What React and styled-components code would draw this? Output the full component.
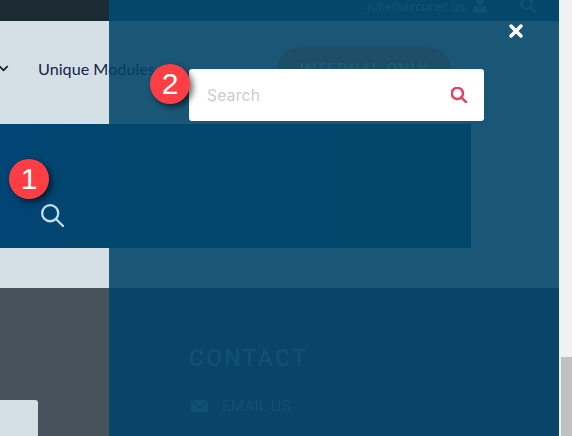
import React from "react";
import styled, { createGlobalStyle } from "styled-components";
import { X } from "lucide-react";
import { FaChevronDown, FaUser, FaSearch } from "react-icons/fa";

const GlobalStyle = createGlobalStyle`
html, body {
  margin: 0;
  padding: 0;
  height: 100%;
  overflow: hidden;
  background: #f1f1f1;
}
* { box-sizing: border-box; }
`;

const Shell = styled.div`
display: flex;
width: 572px;
height: 436px;
`;
const Viewport = styled.div`
position: relative;
width: 559px;
height: 436px;
overflow: hidden;
font-family: "Open Sans", sans-serif;
`;
const ScrollTrack = styled.div`
width: 13px;
height: 436px;
background: #f1f1f1;
padding: 357px 0 0 2px;
`;
const ScrollThumb = styled.div`
height: 79px;
background: #c1c1c1;
`;

const TopBar = styled.div`
height: 21px;
background: linear-gradient(90deg, #1b2a33 109px, #2c5c80 109px);
display: flex;
justify-content: flex-end;
align-items: flex-start;
padding-right: 23px;
color: #a9bcc7;
overflow: hidden;
`;
const Email = styled.span`
font-size: 12.5px;
line-height: 13px;
margin-right: 7px;
`;
const TopIcon = styled.span`
display: flex;
color: #8ba4b2;
margin-left: ${(p) => p.$gap || 0}px;
margin-top: -3px;
`;

const NavBar = styled.div`
height: 103px;
background: #d5e0e6;
display: flex;
align-items: flex-start;
`;
const NavChevron = styled.span`
display: flex;
color: #17233a;
margin: 42px 0 0 -2px;
width: 40px;
`;
const NavLabel = styled.span`
font-family: Lato, sans-serif;
font-size: 16.2px;
line-height: 24px;
margin-top: 36px;
width: 239px;
color: #16224a;
white-space: nowrap;
`;
const Pill = styled.div`
width: 174px;
height: 44px;
margin-top: 26px;
border-radius: 22px;
background: #f09668;
color: #fff;
font-family: Roboto, sans-serif;
font-size: 16px;
letter-spacing: 0.9px;
display: flex;
justify-content: center;
align-items: center;
white-space: nowrap;
`;

const HeroBand = styled.div`
height: 164px;
background: #d5e0e6;
`;
const Hero = styled.div`
position: relative;
z-index: 1;
width: 471px;
height: 124px;
background: linear-gradient(90deg, #014575 0%, #01466c 25%, #01466b 100%);
padding: 80px 0 0 41px;
color: #c5dce6;
`;

const Footer = styled.div`
height: 148px;
background: #46525c;
display: grid;
grid-template-columns: 38px 151px 1fr;
`;
const FooterCard = styled.div`
grid-column: 1;
margin-top: 112px;
background: #d5e0e6;
border-radius: 0 3px 0 0;
`;
const ContactColumn = styled.div`
grid-column: 3;
padding-top: 57px;
color: #93abb8;
font-family: Roboto, sans-serif;
`;
const ContactTitle = styled.div`
font-size: 23px;
font-weight: 500;
line-height: 28px;
letter-spacing: 2.2px;
`;
const ContactRow = styled.div`
display: flex;
align-items: center;
margin-top: 23px;
font-size: 15.5px;
line-height: 20px;
padding-left: 2px;
gap: 14px;
`;

const Overlay = styled.div`
position: absolute;
left: 109px;
top: 0;
right: 0;
bottom: 0;
background: rgba(0, 67, 104, 0.88);
`;
const CloseButton = styled.span`
position: absolute;
left: 397px;
top: 21px;
display: flex;
color: #fff;
`;
const SearchBox = styled.div`
position: absolute;
z-index: 2;
left: 80px;
top: 69px;
width: 295px;
height: 52px;
background: #fff;
border-radius: 3px;
display: flex;
align-items: center;
justify-content: space-between;
padding: 0 17px 0 18px;
`;
const Placeholder = styled.span`
font-family: Inter, sans-serif;
font-size: 15.5px;
letter-spacing: 0.3px;
color: #cbcbcb;
`;
const SearchIcon = styled.span`
display: flex;
color: #e8405e;
`;

const Badge = styled.div`
position: absolute;
z-index: 3;
left: ${(p) => p.$x}px;
top: ${(p) => p.$y}px;
width: 40px;
height: 40px;
border-radius: 50%;
background: #fd3f45;
box-shadow: 3px 3px 6px rgba(0, 0, 0, 0.6);
color: #fff;
font-family: "Liberation Sans", sans-serif;
font-size: 30px;
display: flex;
align-items: center;
justify-content: center;
`;

// magnifier with a long thin handle, the lucide one has a much shorter handle
const Magnifier = ({ size, stroke }) => (
    <svg width={size} height={size} viewBox="0 0 24 24" fill="none" stroke="currentColor" strokeWidth={stroke} strokeLinecap="round" style={{ display: "block" }}>
        <circle cx="9.6" cy="9.6" r="8.4" />
        <path d="M15.6 15.6L23 23" />
    </svg>
);

const MailIcon = () => (
    <svg width="17" height="12" viewBox="0 0 17 12" style={{ display: "block" }}>
        <path d="M0 0h17L8.5 6.5z" fill="currentColor" />
        <path d="M0 1.8v10.2h17V1.8L8.5 8.3z" fill="currentColor" />
    </svg>
);

const App = () => {
    return (
        <Shell>
            <GlobalStyle />
            <Viewport>
                <TopBar>
                    <Email>julie@accunet.us</Email>
                    <TopIcon><FaUser size={16} /></TopIcon>
                    <TopIcon $gap={32}><FaSearch size={16} /></TopIcon>
                </TopBar>
                <NavBar>
                    <NavChevron><FaChevronDown size={11} /></NavChevron>
                    <NavLabel>Unique Modules</NavLabel>
                    <Pill>INTERNAL ONLY</Pill>
                </NavBar>
                <HeroBand>
                    <Hero><Magnifier size={23} stroke={2.4} /></Hero>
                </HeroBand>
                <Footer>
                    <FooterCard />
                    <ContactColumn>
                        <ContactTitle>CONTACT</ContactTitle>
                        <ContactRow><MailIcon />EMAIL US</ContactRow>
                    </ContactColumn>
                </Footer>
                <Overlay>
                    <CloseButton><X size={20} strokeWidth={4.2} /></CloseButton>
                    <SearchBox>
                        <Placeholder>Search</Placeholder>
                        <SearchIcon><Magnifier size={16} stroke={3.8} /></SearchIcon>
                    </SearchBox>
                </Overlay>
                <Badge $x={9} $y={159}>1</Badge>
                <Badge $x={150} $y={64}>2</Badge>
            </Viewport>
            <ScrollTrack><ScrollThumb /></ScrollTrack>
        </Shell>
    );
};

export default App;
